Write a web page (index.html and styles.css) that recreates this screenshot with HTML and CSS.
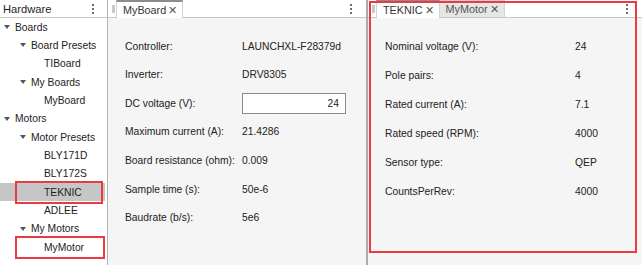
FILE: index.html
```html
<!DOCTYPE html>
<html>
<head>
<meta charset="utf-8">
<link rel="stylesheet" href="styles.css">
</head>
<body>
<div class="app">
  <aside class="hw">
    <div class="hw-head">
      <span class="hw-title">Hardware</span>
      <span class="dots"><i></i><i></i><i></i></span>
    </div>
    <ul class="tree">
      <li class="row l0"><span class="caret"></span>Boards</li>
      <li class="row l1"><span class="caret"></span>Board Presets</li>
      <li class="row leaf">TIBoard</li>
      <li class="row l1"><span class="caret"></span>My Boards</li>
      <li class="row leaf">MyBoard</li>
      <li class="row l0"><span class="caret"></span>Motors</li>
      <li class="row l1"><span class="caret"></span>Motor Presets</li>
      <li class="row leaf">BLY171D</li>
      <li class="row leaf">BLY172S</li>
      <li class="row leaf selected">TEKNIC<span class="mark"></span></li>
      <li class="row leaf">ADLEE</li>
      <li class="row l1"><span class="caret"></span>My Motors</li>
      <li class="row leaf">MyMotor<span class="mark"></span></li>
    </ul>
  </aside>

  <section class="doc board">
    <div class="tabbar">
      <span class="grip"></span>
      <span class="tab active">MyBoard <span class="x">✕</span></span>
      <span class="spacer"></span>
      <span class="dots"><i></i><i></i><i></i></span>
    </div>
    <div class="form board-form">
      <span class="lbl">Controller:</span><span class="val">LAUNCHXL-F28379d</span>
      <span class="lbl">Inverter:</span><span class="val">DRV8305</span>
      <span class="lbl">DC voltage (V):</span><span class="val"><span class="input">24</span></span>
      <span class="lbl">Maximum current (A):</span><span class="val">21.4286</span>
      <span class="lbl">Board resistance (ohm):</span><span class="val">0.009</span>
      <span class="lbl">Sample time (s):</span><span class="val">50e-6</span>
      <span class="lbl">Baudrate (b/s):</span><span class="val">5e6</span>
    </div>
  </section>

  <section class="doc motor">
    <div class="tabbar">
      <span class="grip"></span>
      <span class="tab active">TEKNIC <span class="x">✕</span></span>
      <span class="tab inactive">MyMotor <span class="x">✕</span></span>
      <span class="spacer"></span>
      <span class="dots"><i></i><i></i><i></i></span>
    </div>
    <div class="form motor-form">
      <span class="lbl">Nominal voltage (V):</span><span class="val">24</span>
      <span class="lbl">Pole pairs:</span><span class="val">4</span>
      <span class="lbl">Rated current (A):</span><span class="val">7.1</span>
      <span class="lbl">Rated speed (RPM):</span><span class="val">4000</span>
      <span class="lbl">Sensor type:</span><span class="val">QEP</span>
      <span class="lbl">CountsPerRev:</span><span class="val">4000</span>
    </div>
    <span class="highlight"></span>
  </section>
</div>
</body>
</html>
```

FILE: styles.css
```css
* { box-sizing: border-box; }
html, body { margin: 0; padding: 0; }
body {
  width: 642px;
  height: 265px;
  overflow: hidden;
  background: #ffffff;
  font-family: "Liberation Sans", Arial, sans-serif;
  font-size: 10.3px;
  color: #222;
}
.app {
  display: flex;
  height: 265px;
}

/* Hardware tree */
.hw {
  width: 108px;
  flex: none;
  border-right: 1px solid #b4b4b4;
  background: #fff;
}
.hw-head {
  height: 18px;
  border-bottom: 1px solid #c8c8c8;
  display: flex;
  align-items: center;
  padding: 0 7px 0 3px;
}
.hw-title {
  flex: 1;
  font-size: 11.2px;
  color: #1e1e1e;
}
.dots {
  display: flex;
  flex-direction: column;
  gap: 2px;
  width: 14px;
  align-items: center;
}
.dots i {
  display: block;
  width: 2px;
  height: 2px;
  background: #6e6e6e;
}
.tree {
  list-style: none;
  margin: 0;
  padding: 0;
}
.row {
  position: relative;
  height: 18.33px;
  display: flex;
  align-items: center;
  color: #222;
  white-space: nowrap;
}
.row.l0 { padding-left: 4px; }
.row.l1 { padding-left: 20px; }
.row.leaf { padding-left: 44px; }
.caret {
  width: 0;
  height: 0;
  border-left: 3px solid transparent;
  border-right: 3px solid transparent;
  border-top: 4px solid #555;
  margin-right: 5px;
}
.row.selected {
  background: #c6c6c6;
  margin-right: 2px;
}
.mark {
  position: absolute;
  left: 15px;
  right: 2px;
  top: -2px;
  bottom: -3px;
  border: 2px solid #ec3a44;
}

/* document panels */
.doc {
  position: relative;
  background: #f5f5f5;
  display: flex;
  flex-direction: column;
}
.board {
  width: 260px;
  flex: none;
  border-right: 2px solid #a9acb4;
}
.motor {
  flex: 1;
}
.tabbar {
  height: 18px;
  background: #fff;
  border-bottom: 1px solid #c8c8c8;
  display: flex;
  align-items: stretch;
  padding-left: 4px;
}
.grip {
  width: 3px;
  height: 8px;
  margin: 5px 1px 0 0;
  background: #c9c9c9;
}
.tab {
  display: flex;
  align-items: center;
  padding: 0 5px 0 6px;
  font-size: 10.8px;
  color: #333;
  border-left: 1px solid #d4d4d4;
  border-right: 1px solid #d4d4d4;
  margin-bottom: -1px;
}
.tab.active {
  background: #fff;
  border-top: 2px solid #8c8c8c;
}
.tab.inactive {
  background: #e6e6e6;
  border-top: 1px solid #d0d0d0;
  border-bottom: 1px solid #c8c8c8;
  border-left: none;
  color: #555;
}
.x {
  font-size: 11px;
  margin-left: 2px;
  color: #555;
}
.spacer { flex: 1; }
.tabbar .dots {
  align-self: center;
  margin-right: 8px;
}

.form {
  display: grid;
  align-items: center;
  padding-left: 17px;
}
.board-form {
  grid-template-columns: 117px 104px;
  grid-auto-rows: 28.67px;
  padding-top: 13.7px;
}
.motor-form {
  grid-template-columns: 190px 60px;
  grid-auto-rows: 29px;
  padding-top: 13.5px;
}
.lbl, .val { white-space: nowrap; color: #222; }
.input {
  display: block;
  height: 21px;
  line-height: 19px;
  background: #fff;
  border: 1px solid #8a8a8a;
  text-align: right;
  padding-right: 6px;
}
.highlight {
  position: absolute;
  left: 1px;
  top: 1px;
  width: 268px;
  height: 252px;
  border: 2px solid #ec3a44;
  pointer-events: none;
}
```
